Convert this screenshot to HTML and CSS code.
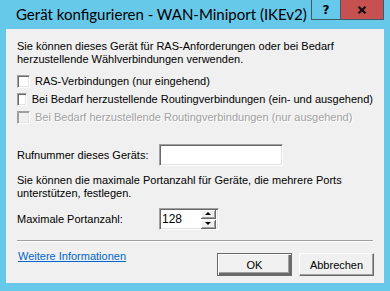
FILE: index.html
```html
<!DOCTYPE html>
<html lang="de">

<head>
    <meta charset="UTF-8">
    <meta name="viewport" content="width=device-width, initial-scale=1.0">
    <title>Gerät konfigurieren</title>
    <link rel="stylesheet" href="styles.css">
</head>

<body>

    <div class="window">

        <header class="titlebar">
            <span class="title">Gerät konfigurieren - WAN-Miniport (IKEv2)</span>
            <div class="caption-buttons">
                <span class="cap-help">?</span>
                <span class="cap-close">
                    <svg width="10" height="8" viewBox="0 0 10 8">
                        <path d="M1.5 0.8 L8.5 7.2 M8.5 0.8 L1.5 7.2" stroke="#111" stroke-width="2.2" />
                    </svg>
                </span>
            </div>
        </header>

        <main class="client">

            <p class="intro">Sie können dieses Gerät für RAS-Anforderungen oder bei Bedarf<br>herzustellende Wählverbindungen verwenden.</p>

            <div class="checks">
                <div class="check"><span class="box"></span>RAS-Verbindungen (nur eingehend)</div>
                <div class="check"><span class="box"></span>Bei Bedarf herzustellende Routingverbindungen (ein- und ausgehend)</div>
                <div class="check disabled"><span class="box"></span>Bei Bedarf herzustellende Routingverbindungen (nur ausgehend)</div>
            </div>

            <div class="field-row phone-row">
                <span class="field-label">Rufnummer dieses Geräts:</span>
                <span class="edit edit-wide"></span>
            </div>

            <p class="ports-text">Sie können die maximale Portanzahl für Geräte, die mehrere Ports<br>unterstützen, festlegen.</p>

            <div class="field-row spin-row">
                <span class="field-label">Maximale Portanzahl:</span>
                <span class="edit edit-spin">
                    <span class="spin-value">128</span>
                    <span class="spin-buttons">
                        <span class="spin-btn"><i class="arrow-up"></i></span>
                        <span class="spin-btn"><i class="arrow-down"></i></span>
                    </span>
                </span>
            </div>

            <hr class="separator">

            <footer class="footer">
                <a class="more-link" href="#">Weitere Informationen</a>
                <div class="buttons">
                    <button class="btn btn-default">OK</button>
                    <button class="btn">Abbrechen</button>
                </div>
            </footer>

        </main>

    </div>

</body>

</html>
```

FILE: styles.css
```css
/*      Variables       */
:root {
    --frame-color: #67c9ea;
    --face-color: #f0f0f0;
    --shadow-dark: #696969;
    --shadow-mid: #a0a0a0;
    --light-color: #e3e3e3;
    --close-color: #c75050;
}

/*      Reset Styles    */
html {
    padding: 0;
    margin: 0;
    box-sizing: border-box;
    font-family: "Liberation Sans", Arial, sans-serif;
}

body {
    padding: 0;
    margin: 0;
    overflow: hidden;
    background-color: var(--frame-color);
}

*,
*::before,
*::after {
    box-sizing: inherit;
}

.window {
    width: 390px;
    height: 291px;
    display: flex;
    flex-direction: column;
}

/*      Title bar       */
.titlebar {
    height: 29px;
    display: flex;
    justify-content: space-between;
    align-items: flex-start;
    padding-left: 16px;
    padding-right: 6px;
}

.title {
    font-family: Lato, "Noto Sans", sans-serif;
    font-size: 15px;
    line-height: 29px;
    white-space: nowrap;
    color: #000;
}

.caption-buttons {
    display: flex;
}

.cap-help,
.cap-close {
    height: 20px;
    display: grid;
    place-content: center;
    border: 1px solid #3b5b68;
    border-top: none;
}

.cap-help {
    width: 29px;
    border-right: none;
    font-family: "DejaVu Sans", sans-serif;
    font-weight: bold;
    font-size: 12px;
    color: #000;
}

.cap-close {
    width: 44px;
    background-color: var(--close-color);
}

/*      Client area     */
.client {
    flex: 1;
    margin: 0 6px 8px;
    padding: 11px 11px 0;
    background-color: var(--face-color);
    font-size: 11px;
    line-height: 13px;
    color: #000;
}

.intro,
.ports-text {
    margin: 0;
    white-space: nowrap;
}

.checks {
    margin-top: 9px;
    display: flex;
    flex-direction: column;
    gap: 5px;
}

.check {
    height: 13px;
    display: flex;
    align-items: center;
    gap: 5px;
    white-space: nowrap;
}

.box {
    width: 13px;
    height: 13px;
    background-color: #fff;
    border: 1px solid;
    border-color: var(--shadow-mid) #fff #fff var(--shadow-mid);
    box-shadow: inset 1px 1px var(--shadow-dark), inset -1px -1px var(--light-color);
}

.check.disabled {
    color: var(--shadow-mid);
    text-shadow: 1px 1px #fff;
}

.check.disabled .box {
    background-color: var(--face-color);
    box-shadow: inset 1px 1px var(--shadow-mid), inset -1px -1px var(--light-color);
}

.field-row {
    height: 22px;
    display: flex;
    align-items: center;
}

.phone-row {
    margin-top: 20px;
}

.ports-text {
    margin-top: 8px;
}

.spin-row {
    margin-top: 8px;
}

.field-label {
    width: 142px;
}

.edit {
    height: 22px;
    background-color: #fff;
    border: 1px solid;
    border-color: var(--shadow-mid) #fff #fff var(--shadow-mid);
    box-shadow: inset 1px 1px var(--shadow-dark), inset -1px -1px var(--light-color);
}

.edit-wide {
    width: 124px;
}

.edit-spin {
    width: 60px;
    display: flex;
    justify-content: space-between;
    align-items: center;
    padding: 0 2px 0 2px;
}

.spin-value {
    font-size: 12px;
}

.spin-buttons {
    display: flex;
    flex-direction: column;
    gap: 1px;
}

.spin-btn {
    width: 15px;
    height: 9px;
    display: grid;
    place-content: center;
    background-color: var(--face-color);
    border-right: 1px solid var(--shadow-dark);
    border-bottom: 1px solid var(--shadow-dark);
    box-shadow: inset 1px 1px #fff, inset -1px -1px var(--shadow-mid);
}

.arrow-up,
.arrow-down {
    width: 0;
    height: 0;
    border-left: 3px solid transparent;
    border-right: 3px solid transparent;
}

.arrow-up {
    border-bottom: 3px solid #000;
}

.arrow-down {
    border-top: 3px solid #000;
}

.separator {
    margin: 10px 0 0;
    height: 2px;
    border: none;
    border-top: 1px solid var(--shadow-mid);
    border-bottom: 1px solid #fff;
}

.footer {
    margin-top: 8px;
    display: flex;
    justify-content: space-between;
    align-items: flex-start;
}

.more-link {
    margin-left: 1px;
    color: #0066cc;
    text-decoration: underline;
}

.buttons {
    margin-top: 3px;
    margin-right: -1px;
    display: flex;
    gap: 7px;
}

.btn {
    width: 75px;
    height: 23px;
    padding: 0;
    font-family: inherit;
    font-size: 11px;
    color: #000;
    background-color: var(--face-color);
    border: 1px solid;
    border-color: #fff var(--shadow-dark) var(--shadow-dark) #fff;
    box-shadow: inset -1px -1px var(--shadow-mid);
}

.btn-default {
    border-color: var(--shadow-dark);
    box-shadow: inset 1px 1px #fff, inset -2px -2px var(--shadow-dark), inset -3px -3px var(--shadow-mid);
}
```
